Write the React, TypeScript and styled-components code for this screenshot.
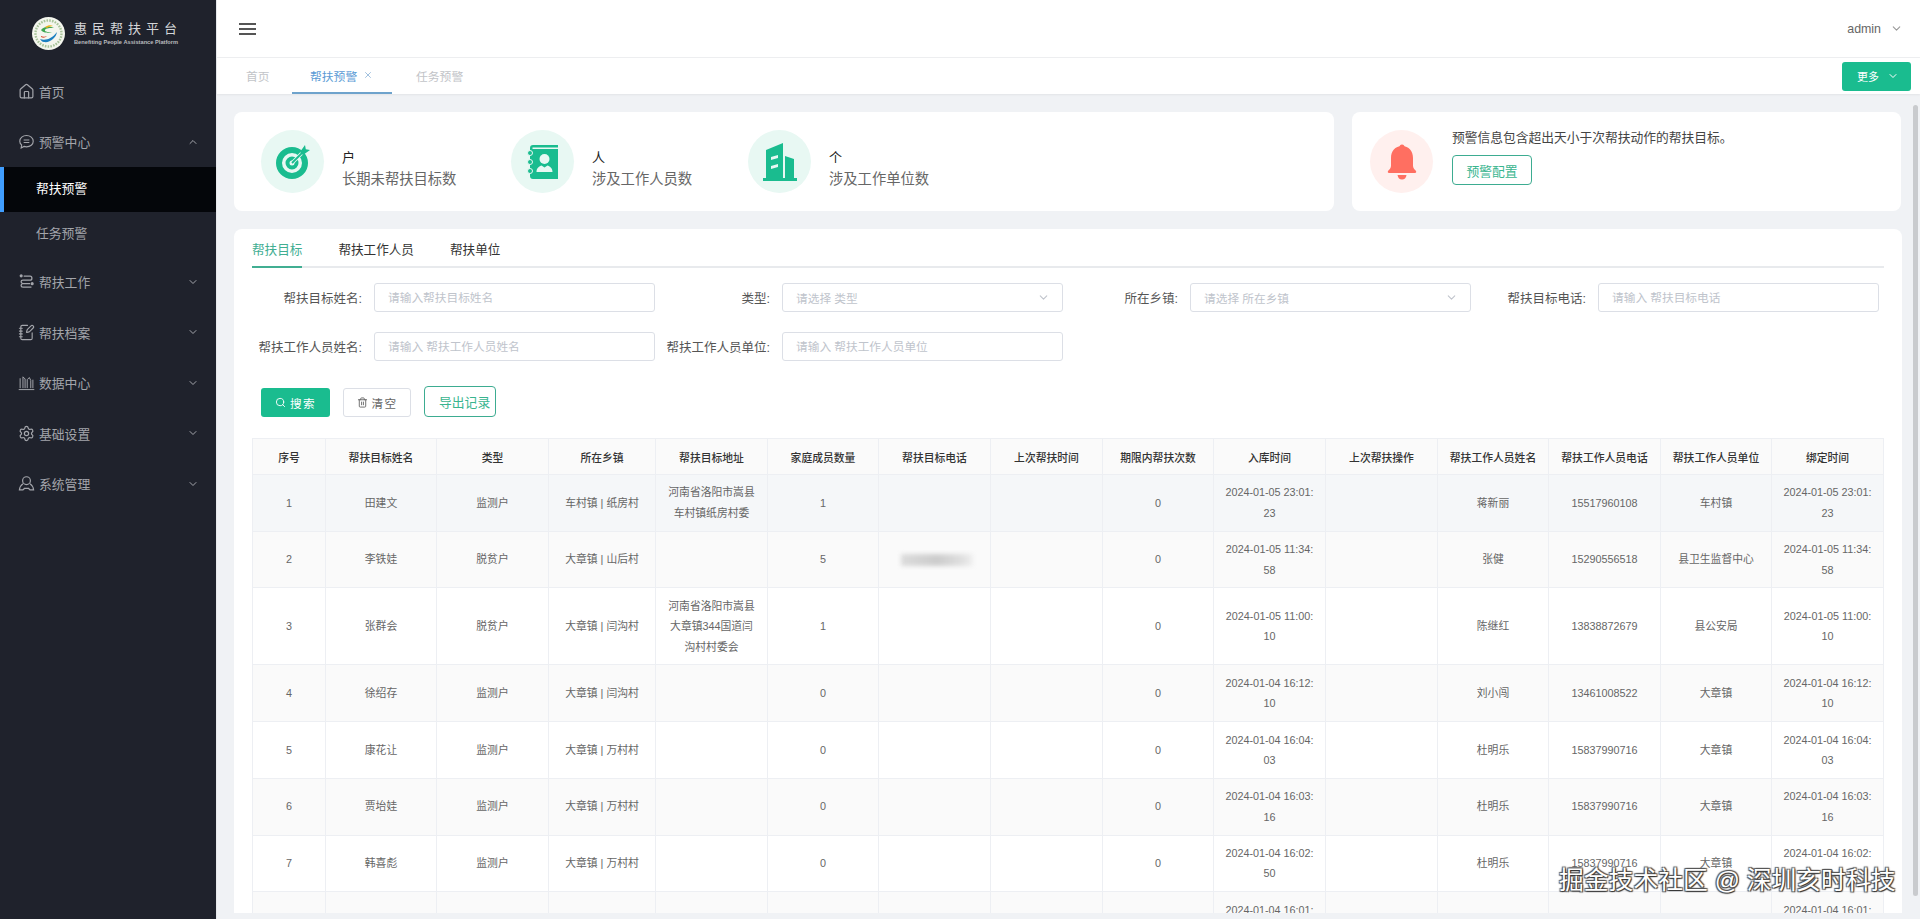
import React from "react";
import styled, { createGlobalStyle } from "styled-components";
import { ChevronDown, ChevronUp, House, NotebookPen, Search, Settings, Trash2, X } from "lucide-react";

const FONT = `"Liberation Sans", "Noto Sans CJK SC", sans-serif`;
const GREEN = "#1abc8f";

const GlobalStyle = createGlobalStyle`
  html, body {
    margin: 0;
    padding: 0;
    height: 100%;
    overflow: hidden;
    font-family: ${FONT};
  }
  * { box-sizing: border-box; }
`;

const Shell = styled.div`
  display: flex;
  width: 1920px;
  height: 919px;
  overflow: hidden;
`;

/* sidebar */
const Sidebar = styled.aside`
  width: 216px;
  flex-shrink: 0;
  background: #1f222c;
  color: #a3a5ab;
`;

const Brand = styled.div`
  height: 66px;
  display: flex;
  align-items: flex-start;
  padding: 17px 0 0 32px;
  gap: 9px;
`;

const BrandText = styled.div`
  padding-top: 3px;
  color: #d4d5d8;
`;

const BrandName = styled.div`
  font-size: 13px;
  line-height: 18px;
  letter-spacing: 5px;
  white-space: nowrap;
`;

const BrandSub = styled.div`
  font-size: 5.7px;
  line-height: 8px;
  margin-top: 0;
  font-weight: 700;
  white-space: nowrap;
  color: #b9bbbf;
`;

const MenuItem = styled.div`
  height: 50.4px;
  display: flex;
  align-items: center;
  padding-left: 18px;
  font-size: 12.8px;
  position: relative;

  svg.lead {
    width: 17px;
    height: 17px;
    margin-right: 4px;
    flex-shrink: 0;
  }
  svg.caret {
    position: absolute;
    left: 187px;
    width: 12px;
    height: 12px;
  }
`;

const SubItem = styled.div<{ $active?: boolean }>`
  height: 45px;
  display: flex;
  align-items: center;
  padding-left: 36px;
  padding-bottom: 3px;
  font-size: 12.8px;
  background: ${(p) => (p.$active ? "#04060a" : "transparent")};
  color: ${(p) => (p.$active ? "#ffffff" : "#a3a5ab")};
  border-left: ${(p) => (p.$active ? "4px solid #409eff" : "0")};
  ${(p) => (p.$active ? "padding-left: 32px;" : "")}
`;

/* top */
const Main = styled.div`
  flex: 1;
  min-width: 0;
  display: flex;
  flex-direction: column;
  background: #f0f2f5;
  border-left: 1px solid #e6e8eb;
`;

const Header = styled.header`
  height: 58px;
  flex-shrink: 0;
  background: #fff;
  border-bottom: 1px solid #eeeff1;
  display: flex;
  align-items: center;
  justify-content: space-between;
  padding: 0 17px 0 22px;
`;

const Burger = styled.div`
  width: 17px;
  height: 12px;
  border-top: 2px solid #555;
  border-bottom: 2px solid #555;
  position: relative;
  &::after {
    content: "";
    position: absolute;
    left: 0;
    right: 0;
    top: 3px;
    height: 2px;
    background: #555;
  }
`;

const User = styled.div`
  display: flex;
  align-items: center;
  gap: 9px;
  font-size: 12.4px;
  color: #666;
  svg {
    width: 13px;
    height: 13px;
    color: #999;
  }
`;

const TabBar = styled.div`
  height: 36px;
  flex-shrink: 0;
  background: #fff;
  display: flex;
  align-items: stretch;
  padding-left: 29px;
  padding-right: 9px;
  box-shadow: 0 1px 2px rgba(0, 0, 0, 0.06);
  position: relative;
`;

const PageTab = styled.div<{ $active?: boolean; $w: number; $ml?: number }>`
  width: ${(p) => p.$w}px;
  margin-left: ${(p) => p.$ml || 0}px;
  display: flex;
  align-items: center;
  font-size: 11.8px;
  color: ${(p) => (p.$active ? "#5b9bd5" : "#c2c4c8")};
  border-bottom: ${(p) => (p.$active ? "2px solid #6ea3cc" : "2px solid transparent")};
  padding-left: ${(p) => (p.$active ? "18px" : "0")};
  svg {
    width: 10px;
    height: 10px;
    margin-left: 6px;
    color: #8fb4d8;
  }
`;

const MoreButton = styled.div`
  margin-left: auto;
  align-self: center;
  width: 69px;
  height: 29px;
  border-radius: 3px;
  background: ${GREEN};
  color: #fff;
  font-size: 11px;
  display: flex;
  align-items: center;
  padding-left: 15px;
  gap: 8px;
  svg {
    width: 12px;
    height: 12px;
  }
`;

/* body */
const BodyRow = styled.div`
  flex: 1;
  min-height: 0;
  display: flex;
  padding-bottom: 6px;
`;

const Scroller = styled.div`
  flex: 1;
  min-width: 0;
  overflow: hidden;
  padding: 18px 0 0 17px;
`;

const Rail = styled.div`
  width: 18px;
  flex-shrink: 0;
  padding: 11px 2px 0 11px;
`;

const Thumb = styled.div`
  height: 791px;
  border-radius: 3px;
  background: #c9cbce;
`;

const TopRow = styled.div`
  display: flex;
  gap: 18px;
  margin-bottom: 18px;
`;

const Card = styled.section`
  background: #fff;
  border-radius: 8px;
  height: 99px;
  display: flex;
  align-items: center;
`;

const StatCard = styled(Card)`
  width: 1100px;
  padding-left: 27px;
`;

const AlertCard = styled(Card)`
  width: 549px;
  padding-left: 18px;
`;

const Stat = styled.div<{ $w: number }>`
  width: ${(p) => p.$w}px;
  display: flex;
  align-items: center;
  gap: 18px;
`;

const IconCircle = styled.div<{ $tone?: "green" | "red" }>`
  width: 63px;
  height: 63px;
  border-radius: 50%;
  flex-shrink: 0;
  display: flex;
  align-items: center;
  justify-content: center;
  background: ${(p) => (p.$tone === "red" ? "#fff0ee" : "#e8f8f3")};
`;

const StatText = styled.div`
  padding-top: 14px;
`;

const StatUnit = styled.div`
  font-size: 13px;
  line-height: 20px;
  color: #222;
`;

const StatLabel = styled.div`
  font-size: 14.3px;
  line-height: 22px;
  color: #666;
  white-space: nowrap;
`;

const AlertBody = styled.div`
  margin-left: 19px;
  padding-bottom: 9px;
`;

const AlertText = styled.div`
  font-size: 12.75px;
  line-height: 18px;
  color: #444;
  margin-bottom: 8px;
`;

const OutlineButton = styled.div<{ $w: number; $h: number; $pad?: number }>`
  width: ${(p) => p.$w}px;
  height: ${(p) => p.$h}px;
  border: 1px solid #3dac91;
  border-radius: 4px;
  display: flex;
  align-items: center;
  justify-content: ${(p) => (p.$pad ? "flex-start" : "center")};
  padding-left: ${(p) => p.$pad || 0}px;
  color: #39b58f;
  font-size: 12.8px;
  white-space: nowrap;
`;

const Panel = styled.section`
  width: 1668px;
  background: #fff;
  border-radius: 8px 8px 0 0;
  padding: 11px 18px 0;
`;

const TabRow = styled.div`
  display: flex;
  gap: 36px;
  height: 28px;
  border-bottom: 2px solid #e8eaed;
`;

const PanelTab = styled.div<{ $active?: boolean }>`
  height: 28px;
  line-height: 20px;
  font-size: 12.6px;
  color: ${(p) => (p.$active ? "#41ae92" : "#333")};
  border-bottom: ${(p) => (p.$active ? "2px solid #41ae92" : "0")};
`;

const FilterGrid = styled.div`
  display: grid;
  grid-template-columns: 403px 408px 408px 408px;
  row-gap: 20px;
  margin-top: 15px;
`;

const Field = styled.div`
  display: flex;
  align-items: center;
  justify-content: flex-end;
  height: 29px;
  gap: 12px;
`;

const FieldLabel = styled.label`
  font-size: 12.5px;
  color: #555;
  white-space: nowrap;
`;

const TextInput = styled.input`
  width: 281px;
  height: 29px;
  border: 1px solid #dcdfe6;
  border-radius: 3px;
  padding: 0 13px;
  font-family: ${FONT};
  font-size: 11.7px;
  outline: none;
  &::placeholder {
    color: #c0c4cc;
  }
`;

const SelectBox = styled.div`
  width: 281px;
  height: 29px;
  border: 1px solid #dcdfe6;
  border-radius: 3px;
  padding: 0 12px 0 13px;
  font-size: 11.7px;
  color: #c0c4cc;
  display: flex;
  align-items: center;
  justify-content: space-between;
  svg {
    width: 13px;
    height: 13px;
    color: #c0c4cc;
  }
`;

const Actions = styled.div`
  display: flex;
  align-items: flex-end;
  gap: 13px;
  margin: 25px 0 21px 9px;
`;

const ActionButton = styled.div<{ $primary?: boolean; $w: number }>`
  width: ${(p) => p.$w}px;
  height: 29px;
  border-radius: 3px;
  display: flex;
  align-items: center;
  justify-content: center;
  gap: 4px;
  font-size: 11.6px;
  letter-spacing: 1.4px;
  background: ${(p) => (p.$primary ? GREEN : "#fff")};
  color: ${(p) => (p.$primary ? "#fff" : "#666")};
  border: ${(p) => (p.$primary ? "0" : "1px solid #dcdfe6")};
  svg {
    width: 11px;
    height: 11px;
  }
`;

/* table */
const Table = styled.table`
  width: 1631px;
  table-layout: fixed;
  border-collapse: collapse;
  font-size: 10.8px;
  color: #666;
  text-align: center;
`;

const Th = styled.th`
  height: 36px;
  font-weight: 500;
  color: #333;
  background: #fafafa;
  border: 1px solid #edeff3;
  padding: 0 4px;
  white-space: nowrap;
`;

const Row = styled.tr<{ $bg: string }>`
  background: ${(p) => p.$bg};
`;

const Td = styled.td`
  line-height: 20.4px;
  padding: 7.45px 10px;
  border: 1px solid #edeff3;
  word-break: break-all;
`;

const Blurred = styled.div`
  width: 72px;
  height: 12px;
  margin: 0 0 0 12px;
  background: linear-gradient(90deg, #dcdcdc, #cccccc 50%, #e0e0e0 85%, #f0f0f0);
  filter: blur(2px);
`;

const Watermark = styled.div`
  position: absolute;
  left: 1559px;
  top: 868px;
  font-size: 24.8px;
  line-height: 26px;
  color: #fff;
  white-space: nowrap;
  text-shadow: 1px 1px 1px #333, -1px -1px 1px #555, 1px -1px 1px #555, -1px 1px 1px #555;
`;

const COLUMN_WIDTHS = [73, 111, 112, 107, 112, 111, 112, 112, 111, 112, 112, 111, 112, 111, 112];

const COLUMNS = [
  "序号", "帮扶目标姓名", "类型", "所在乡镇", "帮扶目标地址", "家庭成员数量", "帮扶目标电话", "上次帮扶时间",
  "期限内帮扶次数", "入库时间", "上次帮扶操作", "帮扶工作人员姓名", "帮扶工作人员电话", "帮扶工作人员单位", "绑定时间",
];

type Person = {
  name: string;
  kind: string;
  town: string;
  address: string;
  family: string;
  blurred?: boolean;
  count: string;
  time: string;
  worker: string;
  phone: string;
  unit: string;
};

const ROWS: Person[] = [
  { name: "田建文", kind: "监测户", town: "车村镇 | 纸房村", address: "河南省洛阳市嵩县车村镇纸房村委", family: "1", count: "0", time: "2024-01-05 23:01:23", worker: "蒋新丽", phone: "15517960108", unit: "车村镇" },
  { name: "李铁娃", kind: "脱贫户", town: "大章镇 | 山后村", address: "", family: "5", blurred: true, count: "0", time: "2024-01-05 11:34:58", worker: "张健", phone: "15290556518", unit: "县卫生监督中心" },
  { name: "张群会", kind: "脱贫户", town: "大章镇 | 闫沟村", address: "河南省洛阳市嵩县大章镇344国道闫沟村村委会", family: "1", count: "0", time: "2024-01-05 11:00:10", worker: "陈继红", phone: "13838872679", unit: "县公安局" },
  { name: "徐绍存", kind: "监测户", town: "大章镇 | 闫沟村", address: "", family: "0", count: "0", time: "2024-01-04 16:12:10", worker: "刘小闯", phone: "13461008522", unit: "大章镇" },
  { name: "康花让", kind: "监测户", town: "大章镇 | 万村村", address: "", family: "0", count: "0", time: "2024-01-04 16:04:03", worker: "杜明乐", phone: "15837990716", unit: "大章镇" },
  { name: "贾坮娃", kind: "监测户", town: "大章镇 | 万村村", address: "", family: "0", count: "0", time: "2024-01-04 16:03:16", worker: "杜明乐", phone: "15837990716", unit: "大章镇" },
  { name: "韩喜彪", kind: "监测户", town: "大章镇 | 万村村", address: "", family: "0", count: "0", time: "2024-01-04 16:02:50", worker: "杜明乐", phone: "15837990716", unit: "大章镇" },
  { name: "", kind: "", town: "", address: "", family: "", count: "", time: "2024-01-04 16:01:00", worker: "", phone: "", unit: "" },
];

const ROW_BG = ["#f5f7f9", "#fafafa", "#ffffff", "#fafafa", "#ffffff", "#fafafa", "#ffffff", "#fafafa"];

const LogoMark = () => (
  <svg width="33" height="33" viewBox="0 0 33 33">
    <circle cx="16.5" cy="16.5" r="16.5" fill="#f4f6ee" />
    <circle cx="16.5" cy="16.5" r="13" fill="none" stroke="#a8c49a" strokeWidth="2.4" strokeDasharray="1.6 1.2" />
    <path d="M9 13c3-4 9-4 13-2-4 0-8 0-9 2s5 2 7 3c-4 0-9 0-11-3z" fill="#3fa652" />
    <path d="M13 10c3-2 6-2 8-1-2 0-5 1-6 2z" fill="#e9b320" />
    <path d="M8 22c5 2 12 0 17-7-1 6-7 11-13 10-2 0-3-2-4-3z" fill="#1c7fc0" />
    <path d="M9 19c2 1 4 1 6 0-2 2-4 2-6 1z" fill="#d8472f" />
  </svg>
);

const ChatIcon = () => (
  <svg className="lead" viewBox="0 0 24 24" fill="none" stroke="currentColor" strokeWidth="1.6">
    <path d="M12 3.5c5.2 0 9.5 3.4 9.5 8s-4.300 8-9.500 8c-1.300 0-2.500-.2-3.600-.6L4.500 21l.6-4.200C3.400 15.400 2.500 13.600 2.500 11.500c0-4.600 4.300-8 9.500-8z" />
    <path d="M8 9.800h8M8 13.400h8" />
  </svg>
);

const FlowIcon = () => (
  <svg className="lead" viewBox="0 0 24 24" fill="none" stroke="currentColor" strokeWidth="1.800">
    <circle cx="4.500" cy="4" r="2.200" fill="currentColor" stroke="none" />
    <circle cx="20" cy="15" r="2.200" fill="currentColor" stroke="none" />
    <path d="M8 4.500h9c3.500 0 3.500 5.500 0 5.500H7c-3.500 0-3.500 5 0 5h10M7 15c-3.500 0-3.500 5 0 5h12" />
  </svg>
);

const ChartIcon = () => (
  <svg className="lead" viewBox="0 0 24 24" fill="none" stroke="currentColor" strokeWidth="1.400">
    <path d="M1 22h22M3 20V6M7 20V4l3 3v13M13 20V8l3-3 2 4v11M21 20V8" />
  </svg>
);

const PersonIcon = () => (
  <svg className="lead" viewBox="0 0 24 24" fill="none" stroke="currentColor" strokeWidth="1.700">
    <circle cx="12" cy="8" r="5.500" />
    <path d="M7 12.500C4 14.500 2.500 17 2 21h5l2-2h6l2 2h5c-.5-4-2-6.500-5-8.500" />
  </svg>
);

const TargetIcon = () => (
  <svg width="36" height="36" viewBox="0 0 36 36">
    <path fillRule="evenodd" fill={GREEN} d="M17 3a16 16 0 1 1-16 16 16 16 0 0 1 16-16zm0 6a10 10 0 1 0 10 10 10 10 0 0 0-10-10z" />
    <path fillRule="evenodd" fill={GREEN} d="M17 12.500a6.500 6.500 0 1 1-6.500 6.500 6.500 6.500 0 0 1 6.500-6.500zm0 4a2.500 2.500 0 1 0 2.500 2.500 2.500 2.500 0 0 0-2.500-2.500z" />
    <path d="M17 19 29 7" stroke="#e8f8f3" strokeWidth="3.500" />
    <path d="M17 19 28 8" stroke={GREEN} strokeWidth="1.800" />
    <path d="M25 8l5-7 .8 4.200L35 6l-7 5z" fill={GREEN} />
  </svg>
);

const BookIcon = () => (
  <svg width="34" height="36" viewBox="0 0 34 36">
    <path d="M4 4c0-2 1-3 3-3h25v2.500H6.500V5H32v30H7c-2 0-3-1-3-3z" fill={GREEN} />
    <circle cx="4" cy="9" r="2.500" fill={GREEN} stroke="#e8f8f3" strokeWidth="1" />
    <circle cx="4" cy="18" r="2.500" fill={GREEN} stroke="#e8f8f3" strokeWidth="1" />
    <circle cx="4" cy="27" r="2.500" fill={GREEN} stroke="#e8f8f3" strokeWidth="1" />
    <circle cx="18.500" cy="15" r="5" fill="#e8f8f3" />
    <path d="M10.500 28c0-4 3-6 5-6.500l3 2 3-2c2 .5 5 2.500 5 6.500z" fill="#e8f8f3" />
  </svg>
);

const BuildingIcon = () => (
  <svg width="34" height="40" viewBox="0 0 34 40">
    <path d="M3 37V8L20 1v36zM22 37V14l9 3v20z" fill={GREEN} />
    <rect x="0" y="36" width="34" height="3" fill={GREEN} />
    <path d="M8 15l7-2v3l-7 2zM8 24l7-2v3l-7 2z" fill="#e8f8f3" />
  </svg>
);

const BellIcon = () => (
  <svg width="30" height="36" viewBox="0 0 30 36">
    <circle cx="15" cy="3" r="2.500" fill="#ff6f61" />
    <path d="M15 2c7 0 11 5 11 12v8c0 2 2 4 3 5 .5 1 0 2-1 2H2c-1 0-1.500-1-1-2 1-1 3-3 3-5v-8C4 7 8 2 15 2z" fill="#ff6f61" />
    <path d="M10.500 31h9c-.5 3-2 4.500-4.500 4.500S11 34 10.500 31z" fill="#ff6f61" />
  </svg>
);

const MENU_AFTER = [
  { label: "帮扶工作", icon: <FlowIcon /> },
  { label: "帮扶档案", icon: <NotebookPen className="lead" strokeWidth={1.6} /> },
  { label: "数据中心", icon: <ChartIcon /> },
  { label: "基础设置", icon: <Settings className="lead" strokeWidth={1.7} /> },
  { label: "系统管理", icon: <PersonIcon /> },
];

const STATS = [
  { unit: "户", label: "长期未帮扶目标数", icon: <TargetIcon />, width: 250 },
  { unit: "人", label: "涉及工作人员数", icon: <BookIcon />, width: 237 },
  { unit: "个", label: "涉及工作单位数", icon: <BuildingIcon />, width: 236 },
];

const App = () => {
  return (
    <Shell>
      <GlobalStyle />
      <Sidebar>
        <Brand>
          <LogoMark />
          <BrandText>
            <BrandName>惠民帮扶平台</BrandName>
            <BrandSub>Benefiting People Assistance Platform</BrandSub>
          </BrandText>
        </Brand>
        <MenuItem>
          <House className="lead" strokeWidth={1.7} />
          首页
        </MenuItem>
        <MenuItem>
          <ChatIcon />
          预警中心
          <ChevronUp className="caret" />
        </MenuItem>
        <SubItem $active>帮扶预警</SubItem>
        <SubItem>任务预警</SubItem>
        {MENU_AFTER.map((item) => (
          <MenuItem key={item.label}>
            {item.icon}
            {item.label}
            <ChevronDown className="caret" />
          </MenuItem>
        ))}
      </Sidebar>

      <Main>
        <Header>
          <Burger />
          <User>
            admin
            <ChevronDown />
          </User>
        </Header>
        <TabBar>
          <PageTab $w={46}>首页</PageTab>
          <PageTab $active $w={100}>
            帮扶预警
            <X />
          </PageTab>
          <PageTab $w={80} $ml={24}>
            任务预警
          </PageTab>
          <MoreButton>
            更多
            <ChevronDown />
          </MoreButton>
        </TabBar>

        <BodyRow>
          <Scroller>
            <TopRow>
              <StatCard>
                {STATS.map((s) => (
                  <Stat key={s.unit} $w={s.width}>
                    <IconCircle>{s.icon}</IconCircle>
                    <StatText>
                      <StatUnit>{s.unit}</StatUnit>
                      <StatLabel>{s.label}</StatLabel>
                    </StatText>
                  </Stat>
                ))}
              </StatCard>
              <AlertCard>
                <IconCircle $tone="red">
                  <BellIcon />
                </IconCircle>
                <AlertBody>
                  <AlertText>预警信息包含超出天小于次帮扶动作的帮扶目标。</AlertText>
                  <OutlineButton $w={80} $h={30}>
                    预警配置
                  </OutlineButton>
                </AlertBody>
              </AlertCard>
            </TopRow>

            <Panel>
              <TabRow>
                <PanelTab $active>帮扶目标</PanelTab>
                <PanelTab>帮扶工作人员</PanelTab>
                <PanelTab>帮扶单位</PanelTab>
              </TabRow>

              <FilterGrid>
                <Field>
                  <FieldLabel>帮扶目标姓名:</FieldLabel>
                  <TextInput placeholder="请输入帮扶目标姓名" />
                </Field>
                <Field>
                  <FieldLabel>类型:</FieldLabel>
                  <SelectBox>
                    请选择 类型
                    <ChevronDown />
                  </SelectBox>
                </Field>
                <Field>
                  <FieldLabel>所在乡镇:</FieldLabel>
                  <SelectBox>
                    请选择 所在乡镇
                    <ChevronDown />
                  </SelectBox>
                </Field>
                <Field>
                  <FieldLabel>帮扶目标电话:</FieldLabel>
                  <TextInput placeholder="请输入 帮扶目标电话" />
                </Field>
                <Field>
                  <FieldLabel>帮扶工作人员姓名:</FieldLabel>
                  <TextInput placeholder="请输入 帮扶工作人员姓名" />
                </Field>
                <Field>
                  <FieldLabel>帮扶工作人员单位:</FieldLabel>
                  <TextInput placeholder="请输入 帮扶工作人员单位" />
                </Field>
              </FilterGrid>

              <Actions>
                <ActionButton $primary $w={69}>
                  <Search />
                  搜索
                </ActionButton>
                <ActionButton $w={68}>
                  <Trash2 />
                  清空
                </ActionButton>
                <OutlineButton $w={72} $h={31} $pad={14}>
                  导出记录
                </OutlineButton>
              </Actions>

              <Table>
                <colgroup>
                  {COLUMN_WIDTHS.map((w, i) => (
                    <col key={i} width={w} />
                  ))}
                </colgroup>
                <thead>
                  <tr>
                    {COLUMNS.map((c) => (
                      <Th key={c}>{c}</Th>
                    ))}
                  </tr>
                </thead>
                <tbody>
                  {ROWS.map((r, i) => (
                    <Row key={i} $bg={ROW_BG[i]}>
                      <Td>{i + 1}</Td>
                      <Td>{r.name}</Td>
                      <Td>{r.kind}</Td>
                      <Td>{r.town}</Td>
                      <Td>{r.address}</Td>
                      <Td>{r.family}</Td>
                      <Td>{r.blurred ? <Blurred /> : null}</Td>
                      <Td />
                      <Td>{r.count}</Td>
                      <Td>{r.time}</Td>
                      <Td />
                      <Td>{r.worker}</Td>
                      <Td>{r.phone}</Td>
                      <Td>{r.unit}</Td>
                      <Td>{r.time}</Td>
                    </Row>
                  ))}
                </tbody>
              </Table>
            </Panel>
          </Scroller>
          <Rail>
            <Thumb />
          </Rail>
        </BodyRow>
      </Main>
      <Watermark>掘金技术社区 @ 深圳亥时科技</Watermark>
    </Shell>
  );
};

export default App;
